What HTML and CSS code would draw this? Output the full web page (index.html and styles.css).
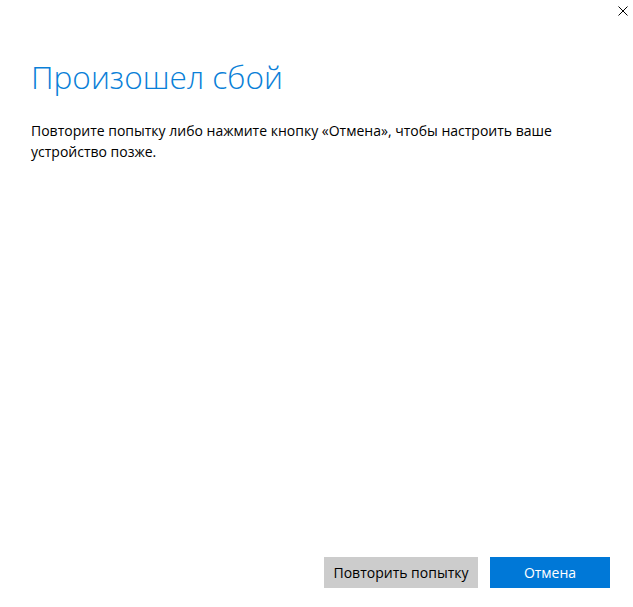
FILE: index.html
```html
<!DOCTYPE html>
<html lang="ru">
  <head>
    <meta charset="UTF-8" />
    <meta name="viewport" content="width=device-width, initial-scale=1.0" />
    <title>Произошел сбой</title>
    <link rel="stylesheet" href="styles.css">
  </head>
  <body>
    <div class="window">
      <div class="titlebar">
        <button class="close" aria-label="Закрыть">
          <svg width="10" height="10" viewBox="0 0 10 10">
            <path d="M0.5 0.5 L9.5 9.5 M9.5 0.5 L0.5 9.5" stroke="#000" stroke-width="1" fill="none" />
          </svg>
        </button>
      </div>
      <div class="content">
        <h1 class="title">Произошел сбой</h1>
        <p class="message">Повторите попытку либо нажмите кнопку «Отмена», чтобы настроить ваше устройство позже.</p>
      </div>
      <div class="actions">
        <button class="btn btn-secondary">Повторить попытку</button>
        <button class="btn btn-primary">Отмена</button>
      </div>
    </div>
  </body>
</html>
```

FILE: styles.css
```css
body {
  margin: 0;
  font-family: "Open Sans", sans-serif;
  background-color: #fff;
  color: #000;
}

.window {
  height: 607px;
  display: flex;
  flex-direction: column;
}

.titlebar {
  display: flex;
  justify-content: flex-end;
  height: 24px;
}

.close {
  width: 21px;
  height: 22px;
  padding: 0;
  border: none;
  background: none;
  display: flex;
  align-items: center;
  justify-content: center;
}

.content {
  flex: 1;
  padding: 0 31px;
}

.title {
  margin: 32px 0 0;
  font-weight: 300;
  font-size: 31.6px;
  line-height: 42px;
  color: #0a7fd8;
}

.message {
  margin: 22px 0 0;
  font-size: 14px;
  line-height: 21px;
  color: #000;
}

.actions {
  display: flex;
  justify-content: flex-end;
  gap: 12px;
  padding: 0 23px 19px;
}

.btn {
  height: 31px;
  border: none;
  font-family: "Open Sans", sans-serif;
  font-size: 14px;
  cursor: pointer;
}

.btn-secondary {
  width: 154px;
  background-color: #cccccc;
  color: #000;
}

.btn-primary {
  width: 120px;
  background-color: #0078d7;
  color: #fff;
}
```
